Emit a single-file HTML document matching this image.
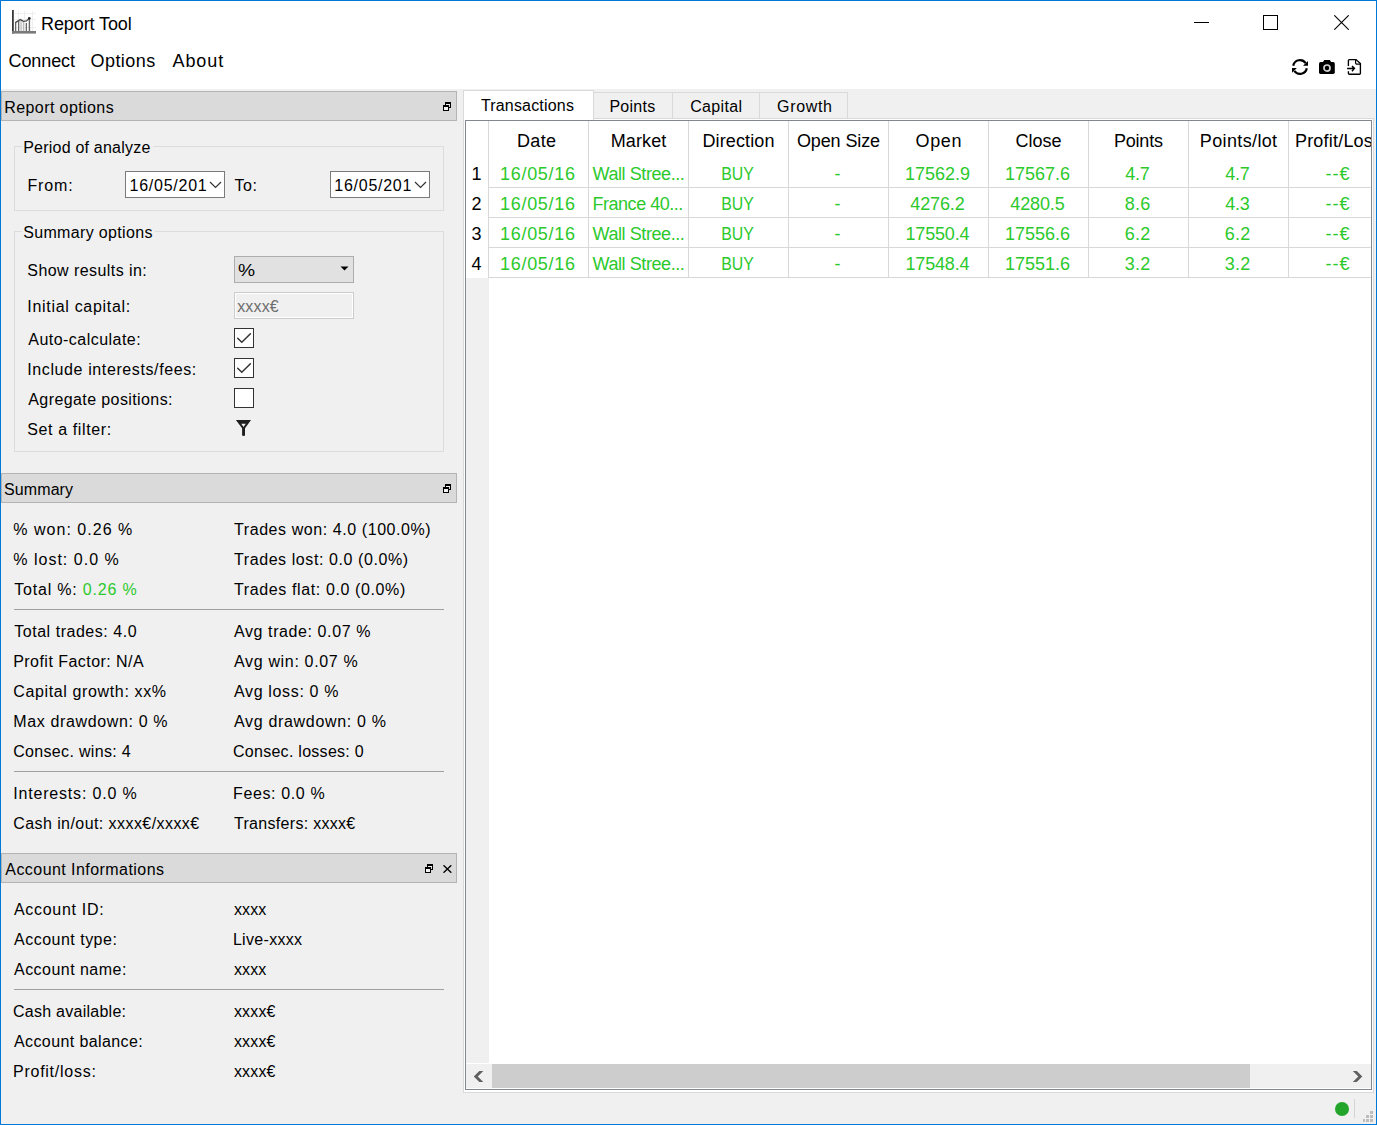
<!DOCTYPE html>
<html><head><meta charset="utf-8">
<style>
*{box-sizing:border-box;margin:0;padding:0}
html,body{width:1377px;height:1125px;overflow:hidden;background:#f0f0f0}
body{position:relative;font-family:"Liberation Sans",sans-serif;color:#000}
.a{position:absolute}
.t{position:absolute;white-space:nowrap;font-size:16px;line-height:16px}
.s{position:absolute;white-space:nowrap;font-size:18px;line-height:18px}
.g{color:#2cc92c}
.k{color:#000}
.hdr{position:absolute;left:1px;width:456px;height:30px;background:#dadada;border:1px solid #b4b4b4}
.grp{position:absolute;left:14px;width:430px;border:1px solid #dcdcdc}
.gtb{position:absolute;height:3px;background:#f0f0f0}
.sep{position:absolute;left:14px;width:430px;height:1px;background:#a0a0a0}
.cb{position:absolute;left:234px;width:20px;height:20px;border:1px solid #333;background:#fff}
.col{position:absolute;top:121px;width:1px;height:157px;background:#d8d8d8}
.row{position:absolute;left:489px;width:882px;height:1px;background:#d8d8d8}
.c{position:absolute;width:99px;text-align:center;white-space:nowrap;font-size:18px;line-height:18px}
</style></head><body>
<!-- window frame -->
<div class="a" style="left:0;top:0;width:1377px;height:1125px;border:1px solid #0078d7;z-index:50"></div>
<div class="a" style="left:1px;top:1px;width:1375px;height:88px;background:#fff"></div>

<!-- title icon -->
<svg class="a" style="left:8px;top:6px" width="34" height="30" viewBox="0 0 34 30">
  <g stroke="#eeeeee" stroke-width="1"><line x1="10.5" y1="5" x2="10.5" y2="25"/><line x1="16.5" y1="5" x2="16.5" y2="25"/><line x1="24.5" y1="5" x2="24.5" y2="25"/><line x1="6" y1="7.5" x2="28" y2="7.5"/><line x1="6" y1="13.5" x2="28" y2="13.5"/><line x1="6" y1="21.5" x2="28" y2="21.5"/></g>
  <rect x="4" y="4" width="1.8" height="23.5" fill="#3a3a3a"/>
  <rect x="4" y="25" width="24" height="2.6" fill="#7a7a7a"/>
  <g fill="#666"><rect x="7" y="16" width="1.3" height="9"/><rect x="10" y="15" width="1.3" height="10"/><rect x="17.7" y="17" width="1.3" height="8"/><rect x="20.7" y="12" width="1.4" height="13"/></g>
  <g fill="#bbb"><rect x="12.4" y="15" width="1.3" height="10"/><rect x="14.8" y="16" width="1.3" height="9"/></g>
  <polyline points="7.3,16.6 12.3,13.6 15.5,15.4 18.5,15 21.5,12" fill="none" stroke="#4a4a4a" stroke-width="1.3"/>
  <circle cx="21.3" cy="12.2" r="1.3" fill="#222"/>
</svg>
<div class="s" style="left:41.0px;top:15px;letter-spacing:-0.100px;">Report Tool</div>
<div class="s" style="left:8.6px;top:52px;letter-spacing:-0.117px;">Connect</div>
<div class="s" style="left:90.5px;top:52px;letter-spacing:0.433px;">Options</div>
<div class="s" style="left:172.5px;top:52px;letter-spacing:0.900px;">About</div>
<!-- window controls -->
<div class="a" style="left:1194px;top:22px;width:15px;height:1px;background:#000"></div>
<div class="a" style="left:1263px;top:15px;width:15px;height:15px;border:1px solid #000"></div>
<svg class="a" style="left:1334px;top:15px" width="15" height="15" viewBox="0 0 15 15"><path d="M0.3 0.3L14.7 14.7M14.7 0.3L0.3 14.7" stroke="#000" stroke-width="1.1"/></svg>

<!-- toolbar icons -->
<svg class="a" style="left:1291px;top:58px" width="18" height="18" viewBox="0 0 18 18">
  <path d="M2.22 7.7A6.9 6.9 0 0 1 14.65 5.04" fill="none" stroke="#000" stroke-width="2.2"/>
  <path d="M17 3L17 7.7L12 7.7Z" fill="#000"/>
  <path d="M15.78 10.3A6.9 6.9 0 0 1 3.35 12.96" fill="none" stroke="#000" stroke-width="2.2"/>
  <path d="M1 14.8L1 10L5.9 10Z" fill="#000"/>
</svg>
<svg class="a" style="left:1319px;top:59px" width="17" height="16" viewBox="0 0 17 16">
  <rect x="0" y="3.1" width="15.8" height="11.8" rx="1.6" fill="#000"/>
  <path d="M3.6 3.6L5.3 0.9H10.8L12.5 3.6Z" fill="#000"/>
  <circle cx="8" cy="9.07" r="3.05" fill="none" stroke="#d4d4d4" stroke-width="1.7"/>
</svg>
<svg class="a" style="left:1340px;top:55px" width="30" height="25" viewBox="0 0 30 25">
  <path d="M8.4 11.1V5.6Q8.4 4.56 9.4 4.56H16L20.4 8.6V18.2Q20.4 19.2 19.4 19.2H9.4Q8.4 19.2 8.4 18.2V16.2" fill="none" stroke="#000" stroke-width="1.35"/>
  <path d="M15.6 4.8V8.1Q15.6 9.1 16.6 9.1H20.4" fill="none" stroke="#000" stroke-width="1.2"/>
  <path d="M7.1 13.4H14.3M12 11.1L14.4 13.4L12 16.2" fill="none" stroke="#000" stroke-width="1.5"/>
</svg>

<!-- ===== LEFT DOCK headers ===== -->
<div class="hdr" style="top:91px"></div>
<svg class="a" style="left:443px;top:102px" width="9" height="9" viewBox="0 0 9 9"><path d="M2 0H8V6H6V5H7V2H3V3H2Z" fill="#000"/><path d="M0 3H6V9H0Z M1 5V8H5V5Z" fill="#000" fill-rule="evenodd"/><rect x="1" y="5" width="4" height="3" fill="#f2f2f2"/><rect x="3" y="2" width="4" height="1" fill="#f2f2f2"/></svg>

<div class="grp" style="top:146px;height:65px"></div>
<div class="gtb" style="left:22px;top:145px;width:131px"></div>
<div class="a" style="left:125px;top:171px;width:100px;height:27px;background:#fff;border:1px solid #7a7a7a"></div>
<svg class="a" style="left:209px;top:181px" width="13" height="8" viewBox="0 0 13 8"><path d="M1 1L6.5 6.5L12 1" fill="none" stroke="#333" stroke-width="1.2"/></svg>
<div class="a" style="left:330px;top:171px;width:100px;height:27px;background:#fff;border:1px solid #7a7a7a"></div>
<svg class="a" style="left:414px;top:181px" width="13" height="8" viewBox="0 0 13 8"><path d="M1 1L6.5 6.5L12 1" fill="none" stroke="#333" stroke-width="1.2"/></svg>

<div class="grp" style="top:231px;height:221px"></div>
<div class="gtb" style="left:22px;top:230px;width:133px"></div>
<div class="a" style="left:234px;top:256px;width:120px;height:27px;background:#e1e1e1;border:1px solid #adadad"></div>
<svg class="a" style="left:340px;top:266px" width="9" height="5" viewBox="0 0 9 5"><path d="M0.5 0.5H8.5L4.5 4.5Z" fill="#000"/></svg>
<div class="a" style="left:234px;top:292px;width:120px;height:27px;background:#f0f0f0;border:1px solid #cccccc;box-shadow:inset 0 0 0 1px #fff"></div>
<div class="cb" style="top:328px"><svg class="a" style="left:0;top:0" width="18" height="18" viewBox="0 0 18 18"><path d="M2.7 9.2L6.8 13.2L15.4 4.8" fill="none" stroke="#333" stroke-width="1.5" stroke-linecap="round"/></svg></div>
<div class="cb" style="top:358px"><svg class="a" style="left:0;top:0" width="18" height="18" viewBox="0 0 18 18"><path d="M2.7 9.2L6.8 13.2L15.4 4.8" fill="none" stroke="#333" stroke-width="1.5" stroke-linecap="round"/></svg></div>
<div class="cb" style="top:388px"></div>
<svg class="a" style="left:228px;top:414px" width="30" height="26" viewBox="0 0 30 26"><path d="M7.9 6H23L17 14.3V21.2Q17 22 15.6 22Q14.1 22 14.1 21V14.3Z" fill="#1e1e1e"/><path d="M13.2 9.8H17.8L15.5 12.9Z" fill="#f0f0f0"/></svg>

<div class="hdr" style="top:473px"></div>
<svg class="a" style="left:443px;top:484px" width="9" height="9" viewBox="0 0 9 9"><path d="M2 0H8V6H6V5H7V2H3V3H2Z" fill="#000"/><path d="M0 3H6V9H0Z M1 5V8H5V5Z" fill="#000" fill-rule="evenodd"/><rect x="1" y="5" width="4" height="3" fill="#f2f2f2"/><rect x="3" y="2" width="4" height="1" fill="#f2f2f2"/></svg>
<div class="sep" style="top:609px"></div>
<div class="sep" style="top:771px"></div>

<div class="hdr" style="top:853px"></div>
<svg class="a" style="left:425px;top:864px" width="9" height="9" viewBox="0 0 9 9"><path d="M2 0H8V6H6V5H7V2H3V3H2Z" fill="#000"/><path d="M0 3H6V9H0Z M1 5V8H5V5Z" fill="#000" fill-rule="evenodd"/><rect x="1" y="5" width="4" height="3" fill="#f2f2f2"/><rect x="3" y="2" width="4" height="1" fill="#f2f2f2"/></svg>
<svg class="a" style="left:443px;top:865px" width="9" height="8" viewBox="0 0 9 8"><path d="M0.5 0.3L8.3 7.7M8.3 0.3L0.5 7.7" stroke="#000" stroke-width="1.4"/></svg>
<div class="sep" style="top:989px"></div>

<!-- ===== RIGHT: tabs ===== -->
<div class="a" style="left:463px;top:118px;width:911px;height:975px;background:#fff;border:1px solid #d9d9d9"></div>
<div class="a" style="left:593px;top:92px;width:80px;height:27px;background:#f0f0f0;border:1px solid #d9d9d9"></div>
<div class="a" style="left:672px;top:92px;width:88px;height:27px;background:#f0f0f0;border:1px solid #d9d9d9"></div>
<div class="a" style="left:759px;top:92px;width:89px;height:27px;background:#f0f0f0;border:1px solid #d9d9d9"></div>
<div class="a" style="left:463px;top:90px;width:131px;height:30px;background:#fff;border:1px solid #d9d9d9;border-bottom:none"></div>

<!-- table frame -->
<div class="a" style="left:465px;top:120px;width:907px;height:970px;border:1px solid #828790;background:#fff"></div>
<div class="a" style="left:466px;top:278px;width:23px;height:785px;background:#f0f0f0"></div>
<div class="a" style="left:488px;top:121px;width:1px;height:157px;background:#d8d8d8"></div>
<div class="col" style="left:588px"></div>
<div class="col" style="left:688px"></div>
<div class="col" style="left:788px"></div>
<div class="col" style="left:888px"></div>
<div class="col" style="left:988px"></div>
<div class="col" style="left:1088px"></div>
<div class="col" style="left:1188px"></div>
<div class="col" style="left:1288px"></div>
<div class="row" style="top:187px"></div>
<div class="row" style="top:217px"></div>
<div class="row" style="top:247px"></div>
<div class="row" style="top:277px"></div>

<div class="a" style="left:466px;top:121px;width:905px;height:40px;overflow:hidden">
<div class="c" style="left:21px;top:11px;letter-spacing:0.333px;text-indent:0.333px">Date</div>
<div class="c" style="left:123px;top:11px;letter-spacing:0.100px;text-indent:0.100px">Market</div>
<div class="c" style="left:223px;top:11px;letter-spacing:0.125px;text-indent:0.125px">Direction</div>
<div class="c" style="left:323px;top:11px;letter-spacing:-0.125px;text-indent:-0.125px">Open Size</div>
<div class="c" style="left:423px;top:11px;letter-spacing:0.667px;text-indent:0.667px">Open</div>
<div class="c" style="left:523px;top:11px;letter-spacing:0.000px;text-indent:0.000px">Close</div>
<div class="c" style="left:623px;top:11px;letter-spacing:-0.240px;text-indent:-0.240px">Points</div>
<div class="c" style="left:723px;top:11px;letter-spacing:0.356px;text-indent:0.356px">Points/lot</div>
<div class="c" style="left:823px;top:11px;letter-spacing:0.200px;text-indent:0.200px">Profit/Loss</div>
</div>
<div class="a g" style="left:466px;top:165px;width:905px;height:120px;overflow:hidden">
<div class="c k" style="left:-1px;top:0px;width:23px">1</div>
<div class="c" style="left:22px;top:0px;letter-spacing:0.686px;text-indent:0.686px">16/05/16</div>
<div class="c" style="left:123px;top:0px;text-align:left;padding-left:3.5px;letter-spacing:-0.417px">Wall Stree...</div>
<div class="c" style="left:222px;top:0px;transform:scaleX(0.881)">BUY</div>
<div class="c" style="left:322px;top:0px;letter-spacing:0.000px;text-indent:0.000px">-</div>
<div class="c" style="left:422px;top:0px;letter-spacing:0.000px;text-indent:0.000px">17562.9</div>
<div class="c" style="left:522px;top:0px;letter-spacing:0.000px;text-indent:0.000px">17567.6</div>
<div class="c" style="left:622px;top:0px;letter-spacing:-0.200px;text-indent:-0.200px">4.7</div>
<div class="c" style="left:722px;top:0px;letter-spacing:-0.200px;text-indent:-0.200px">4.7</div>
<div class="c" style="left:822px;top:0px;letter-spacing:1.000px;text-indent:1.000px">--€</div>
<div class="c k" style="left:-1px;top:30px;width:23px">2</div>
<div class="c" style="left:22px;top:30px;letter-spacing:0.686px;text-indent:0.686px">16/05/16</div>
<div class="c" style="left:123px;top:30px;text-align:left;padding-left:3.5px;letter-spacing:-0.473px">France 40...</div>
<div class="c" style="left:222px;top:30px;transform:scaleX(0.881)">BUY</div>
<div class="c" style="left:322px;top:30px;letter-spacing:0.000px;text-indent:0.000px">-</div>
<div class="c" style="left:422px;top:30px;letter-spacing:-0.120px;text-indent:-0.120px">4276.2</div>
<div class="c" style="left:522px;top:30px;letter-spacing:-0.120px;text-indent:-0.120px">4280.5</div>
<div class="c" style="left:622px;top:30px;letter-spacing:0.300px;text-indent:0.300px">8.6</div>
<div class="c" style="left:722px;top:30px;letter-spacing:-0.200px;text-indent:-0.200px">4.3</div>
<div class="c" style="left:822px;top:30px;letter-spacing:1.000px;text-indent:1.000px">--€</div>
<div class="c k" style="left:-1px;top:60px;width:23px">3</div>
<div class="c" style="left:22px;top:60px;letter-spacing:0.686px;text-indent:0.686px">16/05/16</div>
<div class="c" style="left:123px;top:60px;text-align:left;padding-left:3.5px;letter-spacing:-0.417px">Wall Stree...</div>
<div class="c" style="left:222px;top:60px;transform:scaleX(0.881)">BUY</div>
<div class="c" style="left:322px;top:60px;letter-spacing:0.000px;text-indent:0.000px">-</div>
<div class="c" style="left:422px;top:60px;letter-spacing:-0.167px;text-indent:-0.167px">17550.4</div>
<div class="c" style="left:522px;top:60px;letter-spacing:0.000px;text-indent:0.000px">17556.6</div>
<div class="c" style="left:622px;top:60px;letter-spacing:0.300px;text-indent:0.300px">6.2</div>
<div class="c" style="left:722px;top:60px;letter-spacing:0.300px;text-indent:0.300px">6.2</div>
<div class="c" style="left:822px;top:60px;letter-spacing:1.000px;text-indent:1.000px">--€</div>
<div class="c k" style="left:-1px;top:90px;width:23px">4</div>
<div class="c" style="left:22px;top:90px;letter-spacing:0.686px;text-indent:0.686px">16/05/16</div>
<div class="c" style="left:123px;top:90px;text-align:left;padding-left:3.5px;letter-spacing:-0.417px">Wall Stree...</div>
<div class="c" style="left:222px;top:90px;transform:scaleX(0.881)">BUY</div>
<div class="c" style="left:322px;top:90px;letter-spacing:0.000px;text-indent:0.000px">-</div>
<div class="c" style="left:422px;top:90px;letter-spacing:-0.167px;text-indent:-0.167px">17548.4</div>
<div class="c" style="left:522px;top:90px;letter-spacing:0.000px;text-indent:0.000px">17551.6</div>
<div class="c" style="left:622px;top:90px;letter-spacing:0.300px;text-indent:0.300px">3.2</div>
<div class="c" style="left:722px;top:90px;letter-spacing:0.300px;text-indent:0.300px">3.2</div>
<div class="c" style="left:822px;top:90px;letter-spacing:1.000px;text-indent:1.000px">--€</div>
</div>

<!-- horizontal scrollbar -->
<div class="a" style="left:466px;top:1064px;width:905px;height:24px;background:#f0f0f0"></div>
<div class="a" style="left:492px;top:1064px;width:758px;height:24px;background:#cdcdcd"></div>
<svg class="a" style="left:473px;top:1070px" width="11" height="13" viewBox="0 0 11 13"><path d="M6.3 1H10.3L4.8 6.5L10.3 12H6.3L0.8 6.5Z" fill="#606060"/></svg>
<svg class="a" style="left:1352px;top:1070px" width="11" height="13" viewBox="0 0 11 13"><path d="M0.8 1H4.8L10.3 6.5L4.8 12H0.8L6.3 6.5Z" fill="#606060"/></svg>

<!-- status bar -->
<div class="a" style="left:1335px;top:1102px;width:14px;height:14px;border-radius:50%;background:#22a52a"></div>
<div class="a" style="left:1354px;top:1099px;width:1px;height:19px;background:#d5d5d5"></div>
<svg class="a" style="left:1363px;top:1111px" width="10" height="11" viewBox="0 0 10 11" fill="#bdbdbd"><rect x="7" y="0" width="3" height="3"/><rect x="3" y="4" width="3" height="3"/><rect x="7" y="4" width="3" height="3"/><rect x="0" y="8" width="2" height="3"/><rect x="3" y="8" width="3" height="3"/><rect x="7" y="8" width="3" height="3"/></svg>
<div class="t" style="left:4.3px;top:100px;letter-spacing:0.408px;">Report options</div>
<div class="t" style="left:23.2px;top:140px;letter-spacing:0.219px;">Period of analyze</div>
<div class="t" style="left:27.4px;top:178px;letter-spacing:0.900px;">From:</div>
<div class="t" style="left:129.5px;top:178px;letter-spacing:0.750px;">16/05/201</div>
<div class="t" style="left:234.6px;top:178px;letter-spacing:0.500px;">To:</div>
<div class="t" style="left:334.3px;top:178px;letter-spacing:0.738px;">16/05/201</div>
<div class="t" style="left:23.2px;top:225px;letter-spacing:0.343px;">Summary options</div>
<div class="t" style="left:27.3px;top:263px;letter-spacing:0.433px;">Show results in:</div>
<div class="t" style="left:237.6px;top:263px;letter-spacing:0.000px;transform:scaleX(1.2);transform-origin:0 0">%</div>
<div class="t" style="left:27.3px;top:299px;letter-spacing:0.693px;">Initial capital:</div>
<div class="t" style="left:237.2px;top:299px;letter-spacing:0.150px;color:#6d6d6d">xxxx€</div>
<div class="t" style="left:28.3px;top:332px;letter-spacing:0.464px;">Auto-calculate:</div>
<div class="t" style="left:27.3px;top:362px;letter-spacing:0.605px;">Include interests/fees:</div>
<div class="t" style="left:28.3px;top:392px;letter-spacing:0.400px;">Agregate positions:</div>
<div class="t" style="left:27.3px;top:422px;letter-spacing:0.617px;">Set a filter:</div>
<div class="t" style="left:4.0px;top:482px;letter-spacing:0.100px;">Summary</div>
<div class="t" style="left:13.2px;top:522px;letter-spacing:1.033px;">% won: 0.26 %</div>
<div class="t" style="left:13.2px;top:552px;letter-spacing:1.017px;">% lost: 0.0 %</div>
<div class="t" style="left:14.2px;top:582px;letter-spacing:0.807px;">Total %: <span class="g">0.26 %</span></div>
<div class="t" style="left:234.0px;top:522px;letter-spacing:0.574px;">Trades won: 4.0 (100.0%)</div>
<div class="t" style="left:234.0px;top:552px;letter-spacing:0.582px;">Trades lost: 0.0 (0.0%)</div>
<div class="t" style="left:234.0px;top:582px;letter-spacing:0.618px;">Trades flat: 0.0 (0.0%)</div>
<div class="t" style="left:14.2px;top:624px;letter-spacing:0.537px;">Total trades: 4.0</div>
<div class="t" style="left:234.0px;top:624px;letter-spacing:0.594px;">Avg trade: 0.07 %</div>
<div class="t" style="left:13.2px;top:654px;letter-spacing:0.459px;">Profit Factor: N/A</div>
<div class="t" style="left:234.0px;top:654px;letter-spacing:0.664px;">Avg win: 0.07 %</div>
<div class="t" style="left:13.2px;top:684px;letter-spacing:0.639px;">Capital growth: xx%</div>
<div class="t" style="left:234.0px;top:684px;letter-spacing:0.650px;">Avg loss: 0 %</div>
<div class="t" style="left:13.2px;top:714px;letter-spacing:0.644px;">Max drawdown: 0 %</div>
<div class="t" style="left:234.0px;top:714px;letter-spacing:0.675px;">Avg drawdown: 0 %</div>
<div class="t" style="left:13.2px;top:744px;letter-spacing:0.329px;">Consec. wins: 4</div>
<div class="t" style="left:233.0px;top:744px;letter-spacing:0.275px;">Consec. losses: 0</div>
<div class="t" style="left:13.2px;top:786px;letter-spacing:0.820px;">Interests: 0.0 %</div>
<div class="t" style="left:233.0px;top:786px;letter-spacing:0.630px;">Fees: 0.0 %</div>
<div class="t" style="left:13.2px;top:816px;letter-spacing:0.430px;">Cash in/out: xxxx€/xxxx€</div>
<div class="t" style="left:234.0px;top:816px;letter-spacing:0.300px;">Transfers: xxxx€</div>
<div class="t" style="left:5.3px;top:862px;letter-spacing:0.442px;">Account Informations</div>
<div class="t" style="left:14.0px;top:902px;letter-spacing:0.690px;">Account ID:</div>
<div class="t" style="left:233.9px;top:902px;letter-spacing:0.133px;">xxxx</div>
<div class="t" style="left:14.0px;top:932px;letter-spacing:0.492px;">Account type:</div>
<div class="t" style="left:232.9px;top:932px;letter-spacing:0.312px;">Live-xxxx</div>
<div class="t" style="left:14.0px;top:962px;letter-spacing:0.467px;">Account name:</div>
<div class="t" style="left:233.9px;top:962px;letter-spacing:0.133px;">xxxx</div>
<div class="t" style="left:13.0px;top:1004px;letter-spacing:0.257px;">Cash available:</div>
<div class="t" style="left:233.9px;top:1004px;letter-spacing:0.175px;">xxxx€</div>
<div class="t" style="left:14.0px;top:1034px;letter-spacing:0.400px;">Account balance:</div>
<div class="t" style="left:233.9px;top:1034px;letter-spacing:0.175px;">xxxx€</div>
<div class="t" style="left:13.0px;top:1064px;letter-spacing:0.745px;">Profit/loss:</div>
<div class="t" style="left:233.9px;top:1064px;letter-spacing:0.175px;">xxxx€</div>
<div class="t" style="left:480.9px;top:98px;letter-spacing:0.182px;">Transactions</div>
<div class="t" style="left:609.4px;top:99px;letter-spacing:0.280px;">Points</div>
<div class="t" style="left:690.2px;top:99px;letter-spacing:0.350px;">Capital</div>
<div class="t" style="left:777.0px;top:99px;letter-spacing:0.680px;">Growth</div>
</body></html>
